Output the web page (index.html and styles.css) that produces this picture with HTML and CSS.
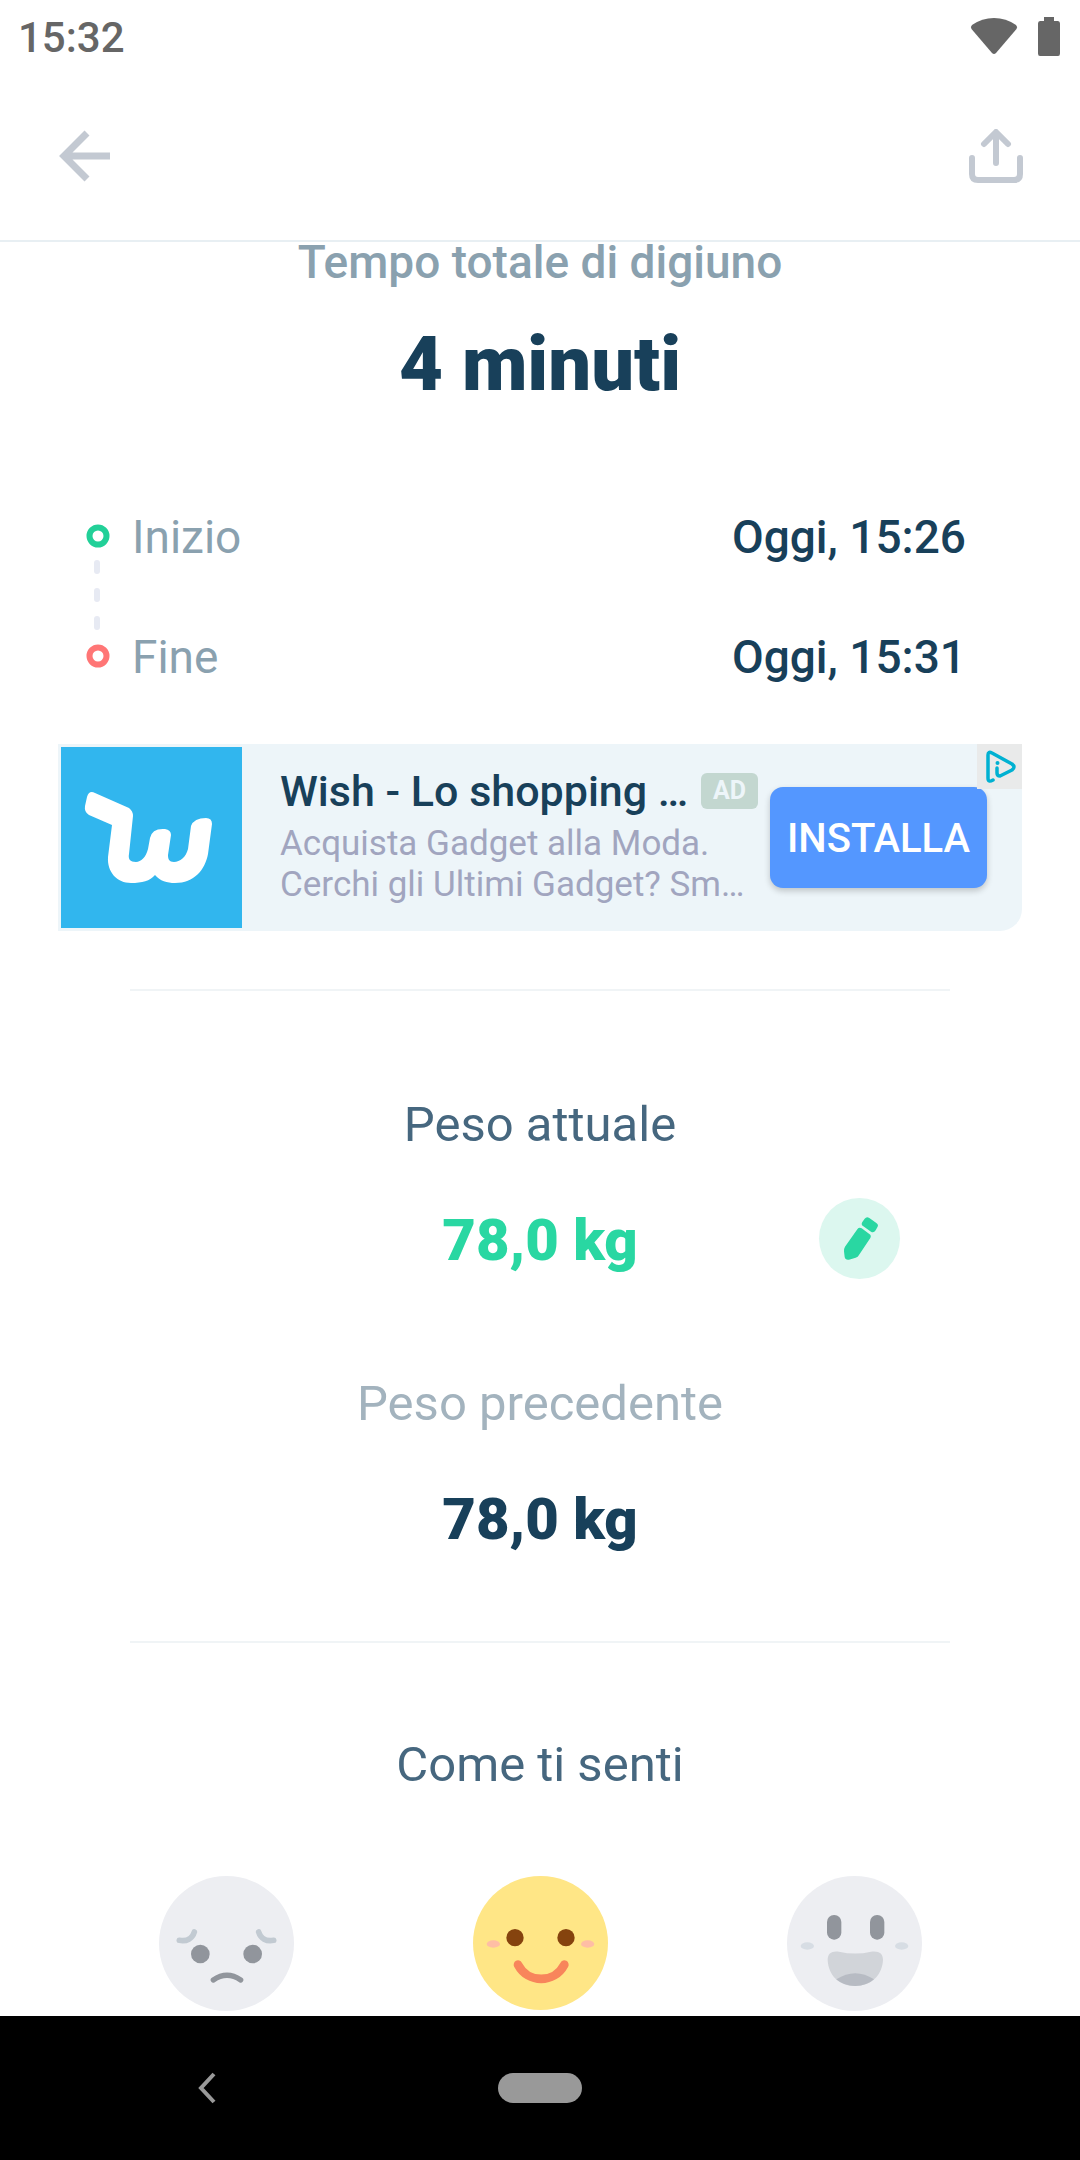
FILE: index.html
```html
<!DOCTYPE html>
<html lang="it">
<head>
<meta charset="utf-8">
<meta name="viewport" content="width=device-width, initial-scale=1">
<title>Riepilogo digiuno</title>
<link rel="stylesheet" href="styles.css">
</head>
<body>
<div class="status-bar">
  <time>15:32</time>
  <div class="status-icons">
    <svg width="48" height="38" viewBox="0 0 48 38" aria-hidden="true"><path d="M2 8Q12 1 24 1T46 8Q48 10 46.500 12L26 36Q24 38 22 36L1.500 12Q0 10 2 8Z"/></svg>
    <svg width="22" height="39" viewBox="0 0 22 39" aria-hidden="true"><path d="M6 0H16V4H20Q22 4 22 6.500V36.500Q22 39 20 39H2Q0 39 0 36.500V6.500Q0 4 2 4H6Z"/></svg>
  </div>
</div>
<header class="app-bar">
  <button class="icon-button" type="button" aria-label="Indietro">
    <svg width="52" height="54" viewBox="0 0 52 54"><path d="M28 4 5 27 28 50M5 27H51" fill="none" stroke="currentColor" stroke-width="7"/></svg>
  </button>
  <button class="icon-button" type="button" aria-label="Condividi">
    <svg width="54" height="54" viewBox="0 0 54 54"><path d="M27 34V4M15 15 27 3 39 15M3 29V45Q3 51 9 51H45Q51 51 51 45V29" fill="none" stroke="currentColor" stroke-width="6" stroke-linecap="round" stroke-linejoin="round"/></svg>
  </button>
</header>

<main class="content">
  <h1 class="total-label">Tempo totale di digiuno</h1>
  <p class="total-value">4 minuti</p>

  <section class="period">
    <svg class="rail" width="24" height="147" viewBox="0 0 24 147" aria-hidden="true">
      <g fill="none" stroke-width="6"><circle cx="12" cy="12" r="8.500" stroke="#22d098"/><circle cx="12" cy="132" r="8.500" stroke="#ff7676"/></g>
      <g fill="#e7eaf3"><rect x="8" y="36" width="6" height="14" rx="3"/><rect x="8" y="64" width="6" height="14" rx="3"/><rect x="8" y="92" width="6" height="14" rx="3"/></g>
    </svg>
    <dl class="times">
      <div class="time-row"><dt>Inizio</dt><dd>Oggi, 15:26</dd></div>
      <div class="time-row"><dt>Fine</dt><dd>Oggi, 15:31</dd></div>
    </dl>
  </section>

  <aside class="ad">
    <svg class="ad-logo" width="181" height="181" viewBox="0 0 181 181" role="img" aria-label="Wish">
      <rect width="181" height="181" fill="#31b6ee"/>
      <path d="M34 46Q28 43 26 50L24 59Q23 65 28 68L51 78L47 110C46 125 56 136 70 136C81 136 89 134 94 128C99 134 106 136 114 136C133 136 144 123 147 107L151 77Q151 71 145 71Q133 71 130 79L127 102C125 110 119 115 113 115C108 115 107 112 107 108L110 88Q110 83 104 82Q91 81 89 91L87 102C85 110 80 115 75 115C69 115 67 112 68 107L72 69Q72 64 68 61Z" fill="#fff"/>
    </svg>
    <div class="ad-text">
      <div class="ad-heading"><h2>Wish - Lo shopping …</h2><span class="ad-badge">AD</span></div>
      <p>Acquista Gadget alla Moda.<br>Cerchi gli Ultimi Gadget? Sm…</p>
    </div>
    <button class="install" type="button">INSTALLA</button>
    <a class="ad-choices" href="#" aria-label="Informazioni sull'annuncio">
      <svg width="45" height="45" viewBox="0 0 45 45"><g fill="none" stroke="#00b1d2" stroke-width="3.500" stroke-linecap="round" stroke-linejoin="round"><path d="M16 36Q11 39 11 34V11Q11 7 15 9L35 20Q39 23 35 26L23 32Q20 32 20 29V24"/></g><circle cx="20.500" cy="19" r="2" fill="#00b1d2"/></svg>
    </a>
  </aside>

  <hr class="divider">

  <section class="weight">
    <h2 class="section-title">Peso attuale</h2>
    <div class="weight-row">
      <p class="weight-value current">78,0 kg</p>
      <button class="edit" type="button" aria-label="Modifica peso">
        <svg width="81" height="81" viewBox="0 0 243 243"><g fill="#29d7a2"><path d="M115 94Q120 87 128 91L151 108Q158 113 154 120L120 171Q117 177 110 179L90 185Q79 187 77 177L75 160Q74 153 78 146Z"/><path d="M137 62Q143 54 151 60L172 75Q180 80 175 88L170 97Q164 106 156 101L133 85Q125 80 130 72Z"/></g></svg>
      </button>
    </div>
    <h2 class="section-title previous">Peso precedente</h2>
    <div class="weight-row"><p class="weight-value">78,0 kg</p></div>
  </section>

  <hr class="divider">

  <fieldset class="mood">
    <legend class="section-title">Come ti senti</legend>
    <div class="faces">
      <label class="face"><input type="radio" name="mood" value="triste" aria-label="Triste">
        <svg width="135" height="135" viewBox="0 0 405 405">
          <circle cx="202.500" cy="202.500" r="202.500" fill="#edeef2"/>
          <g fill="#91959c"><circle cx="124" cy="234" r="28"/><circle cx="281" cy="234" r="28"/></g>
          <g fill="none" stroke-linecap="round"><path d="M61 193C83 197 100 188 106 168M299 168C305 188 322 197 344 193" stroke="#c2cad2" stroke-width="17"/><path d="M163 312Q204 284 245 312" stroke="#91959c" stroke-width="16"/></g>
        </svg></label>
      <label class="face"><input type="radio" name="mood" value="bene" aria-label="Bene" checked>
        <svg width="135" height="135" viewBox="0 0 405 405">
          <ellipse cx="202.500" cy="201" rx="202.500" ry="201" fill="#ffe686"/>
          <g fill="#85430e"><circle cx="126" cy="185" r="26"/><circle cx="279" cy="185" r="26"/></g>
          <g fill="#ffbea5"><ellipse cx="61" cy="204" rx="20" ry="11"/><ellipse cx="344" cy="204" rx="20" ry="11"/></g>
          <path d="M135 266C165 323 244 323 274 266" fill="none" stroke="#f8855b" stroke-width="26" stroke-linecap="round"/>
        </svg></label>
      <label class="face"><input type="radio" name="mood" value="benissimo" aria-label="Benissimo">
        <svg width="135" height="135" viewBox="0 0 405 405">
          <circle cx="202.500" cy="202.500" r="202.500" fill="#edeef2"/>
          <g fill="#91959c"><rect x="120" y="117" width="43" height="74" rx="21"/><rect x="249" y="117" width="43" height="74" rx="21"/></g>
          <g fill="#d7dde4"><ellipse cx="61" cy="210" rx="20" ry="11"/><ellipse cx="344" cy="210" rx="20" ry="11"/></g>
          <path d="M122 252C122 232 134 224 156 227Q205 238 252 227C276 224 288 232 288 252C286 296 254 330 205 330C156 330 124 298 122 252Z" fill="#d1d4d9"/>
          <path d="M148 310Q205 274 261 310Q238 330 205 330Q170 330 148 310Z" fill="#b7bbc3"/>
        </svg></label>
    </div>
  </fieldset>
</main>

<nav class="system-nav" aria-label="Navigazione di sistema">
  <button type="button" aria-label="Indietro"><svg width="20" height="32" viewBox="0 0 20 32"><path d="M17 2 4 16 17 30" fill="none" stroke="#999" stroke-width="4"/></svg></button>
  <button class="home" type="button" aria-label="Home"></button>
</nav>
</body>
</html>
```
FILE: styles.css
```css
* { box-sizing: border-box; margin: 0; }

body {
  display: flex;
  flex-direction: column;
  height: 100vh;
  overflow: hidden;
  background: #fff;
  color: #18405a;
  font-family: Roboto, "Noto Sans", sans-serif;
}

button {
  padding: 0;
  border: 0;
  background: none;
  color: inherit;
  font: inherit;
}

svg { display: block; }

.status-bar {
  display: flex;
  flex: none;
  align-items: center;
  justify-content: space-between;
  height: 72px;
  padding: 0 20px 0 18px;
  color: #666;
  font-size: 42px;
  font-weight: 500;
}

.status-bar time { padding-top: 3px; }

.status-icons {
  display: flex;
  align-items: center;
  gap: 20px;
  fill: currentColor;
}

.app-bar {
  display: flex;
  flex: none;
  align-items: center;
  justify-content: space-between;
  height: 170px;
  padding: 0 57px 0 59px;
  border-bottom: 2px solid #e8eff3;
  color: #c3c9d2;
}

.content {
  flex: 1;
  min-height: 0;
}

.total-label {
  color: #8aa1af;
  font-size: 46px;
  font-weight: 500;
  line-height: 40px;
  text-align: center;
}

.total-value {
  margin-top: 42px;
  font-size: 76px;
  font-weight: 900;
  line-height: 80px;
  text-align: center;
}

.period {
  display: flex;
  align-items: center;
  gap: 22px;
  margin-top: 106px;
  padding: 0 114px 0 86px;
}

.times {
  display: grid;
  flex: 1;
  gap: 66px;
  font-size: 46px;
  line-height: 54px;
}

.time-row {
  display: flex;
  justify-content: space-between;
}

.time-row dt { color: #8aa1af; }
.time-row dd { font-weight: 500; }

.ad {
  position: relative;
  display: flex;
  align-items: center;
  gap: 12px;
  margin: 60px 58px 0;
  padding: 3px 35px 3px 3px;
  border-bottom-right-radius: 22px;
  background: #edf5f9;
}

.ad-logo { flex: none; }

.ad-text {
  flex: 1;
  min-width: 0;
  padding: 0 0 4px 26px;
  color: #a1a5bf;
  font-size: 35px;
  line-height: 41px;
  white-space: nowrap;
}

.ad-heading {
  display: flex;
  align-items: center;
  justify-content: space-between;
  margin-bottom: 7px;
}

.ad-heading h2 {
  color: #18405a;
  font-size: 43px;
  font-weight: 500;
  line-height: 50px;
}

.ad-badge {
  padding: 0 12px;
  border-radius: 6px;
  background: #c3d7d0;
  color: #edf5f9;
  font-size: 25px;
  font-weight: 700;
  line-height: 36px;
}

.install {
  flex: none;
  width: 217px;
  height: 101px;
  padding-top: 2px;
  border-radius: 13px;
  background: #5497ff;
  box-shadow: 0 3px 6px rgba(0, 0, 0, 0.2);
  color: #fff;
  font-size: 40px;
  font-weight: 500;
}

.ad-choices {
  position: absolute;
  top: 0;
  right: 0;
  background: #e9eaea;
}

.divider {
  height: 2px;
  margin: 58px 130px 0;
  border: 0;
  background: #f0f4f6;
}

.weight { padding-top: 104px; }

.section-title {
  color: #46677f;
  font-size: 49px;
  font-weight: 400;
  line-height: 60px;
  text-align: center;
}

.section-title.previous {
  margin-top: 93px;
  color: #a3b3be;
}

.weight-row {
  display: grid;
  grid-template-columns: 1fr auto 1fr;
  align-items: center;
  margin-top: 41px;
  padding: 0 180px;
}

.weight-value {
  grid-column: 2;
  padding-top: 4px;
  font-size: 58px;
  font-weight: 900;
  line-height: 81px;
}

.weight-value.current { color: #29d7a2; }

.edit {
  justify-self: end;
  border-radius: 50%;
  background: #dcf7ef;
}

.weight + .divider { margin-top: 81px; }

.mood {
  padding: 92px 0 0;
  border: 0;
}

.mood legend {
  float: left;
  width: 100%;
}

.faces {
  display: grid;
  grid-template-columns: repeat(3, 1fr);
  clear: both;
  padding: 81px 69px 0;
}

.face {
  position: relative;
  display: flex;
  justify-content: center;
}

.face input {
  position: absolute;
  inset: 0;
  opacity: 0;
}

.system-nav {
  position: relative;
  display: grid;
  flex: none;
  grid-template-columns: 1fr auto 1fr;
  align-items: center;
  justify-items: center;
  height: 144px;
  background: #000;
}

.system-nav button:first-child { margin-right: 84px; }

.home {
  width: 84px;
  height: 30px;
  border-radius: 15px;
  background: #999;
}
```
